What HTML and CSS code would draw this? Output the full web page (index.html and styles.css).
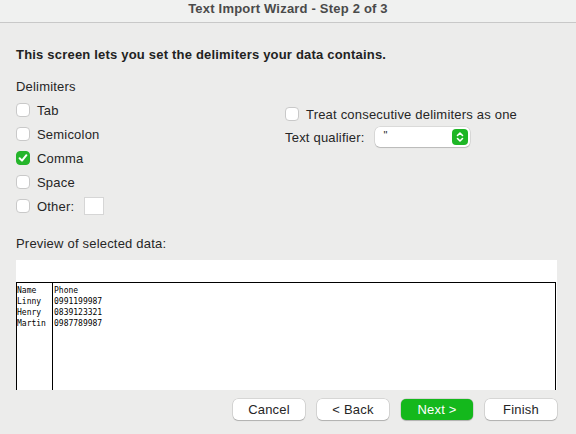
FILE: index.html
```html
<!DOCTYPE html>
<html lang="en">
<head>
  <meta charset="UTF-8" />
  <meta name="viewport" content="width=device-width, initial-scale=1.0"/>
  <title>Text Import Wizard</title>
  <link rel="stylesheet" href="styles.css">
</head>
<body>

  <div class="titlebar">Text Import Wizard - Step 2 of 3</div>

  <div class="content">
    <h1>This screen lets you set the delimiters your data contains.</h1>

    <div class="options">
      <div class="delims">
        <div class="group-label">Delimiters</div>
        <label class="row"><span class="box"></span>Tab</label>
        <label class="row"><span class="box"></span>Semicolon</label>
        <label class="row">
          <span class="box checked">
            <svg width="10" height="10" viewBox="0 0 10 10"><path d="M1.6 5.2 L4 7.6 L8.4 2.2" fill="none" stroke="#fff" stroke-width="2" stroke-linecap="round" stroke-linejoin="round"/></svg>
          </span>Comma
        </label>
        <label class="row"><span class="box"></span>Space</label>
        <label class="row"><span class="box"></span>Other:<span class="other-input"></span></label>
      </div>

      <div class="extra">
        <label class="row"><span class="box"></span>Treat consecutive delimiters as one</label>
        <div class="qualifier">
          <span>Text qualifier:</span>
          <div class="select">
            <span class="select-val">"</span>
            <span class="stepper">
              <svg width="10" height="12" viewBox="0 0 10 12"><path d="M2.5 4.5 L5 2 L7.5 4.5 M2.5 7.5 L5 10 L7.5 7.5" fill="none" stroke="#fff" stroke-width="1.6" stroke-linecap="round" stroke-linejoin="round"/></svg>
            </span>
          </div>
        </div>
      </div>
    </div>

    <div class="preview-label">Preview of selected data:</div>
    <div class="preview">
      <div class="table">
        <div class="col first">
          <div>Name</div>
          <div>Linny</div>
          <div>Henry</div>
          <div>Martin</div>
        </div>
        <div class="col">
          <div>Phone</div>
          <div>0991199987</div>
          <div>0839123321</div>
          <div>0987789987</div>
        </div>
      </div>
    </div>

    <div class="buttons">
      <button class="btn">Cancel</button>
      <button class="btn">&lt; Back</button>
      <button class="btn primary">Next &gt;</button>
      <button class="btn">Finish</button>
    </div>
  </div>

</body>
</html>
```

FILE: styles.css
```css
* {
  margin: 0;
  padding: 0;
  box-sizing: border-box;
}

body {
  background-color: #ececeb;
  font-family: "Liberation Sans", Arial, sans-serif;
  font-size: 13px;
  letter-spacing: 0.2px;
  color: #262626;
  width: 576px;
  height: 434px;
  overflow: hidden;
}

.titlebar {
  height: 23px;
  background-color: #f0f1f0;
  border-bottom: 1px solid #c8c8c8;
  text-align: center;
  font-weight: bold;
  color: #4a4a4a;
  line-height: 17px;
}

.content {
  padding: 0 19px 0 16px;
}

.content h1 {
  font-size: 13px;
  font-weight: bold;
  line-height: 16px;
  margin-top: 24px;
  color: #222;
}

.options {
  display: grid;
  grid-template-columns: 269px 1fr;
  margin-top: 16px;
}

.group-label {
  line-height: 16px;
  margin-bottom: 3px;
}

.row {
  display: flex;
  align-items: center;
  height: 24px;
  gap: 7px;
}

.box {
  width: 14px;
  height: 14px;
  background-color: #fff;
  border: 1px solid #c9c9c9;
  border-radius: 4px;
  display: flex;
  align-items: center;
  justify-content: center;
}

.box.checked {
  background-color: #25b52b;
  border-color: #25b52b;
}

.other-input {
  width: 20px;
  height: 18px;
  background-color: #fff;
  border: 1px solid #d6d6d6;
  margin-left: 3px;
}

.extra {
  padding-top: 23px;
}

.qualifier {
  display: flex;
  align-items: center;
  gap: 10px;
  margin-top: 1px;
}

.select {
  width: 95px;
  height: 20px;
  background-color: #fff;
  border-radius: 5px;
  box-shadow: 0 0 0 0.5px rgba(0, 0, 0, 0.15), 0 1px 1px rgba(0, 0, 0, 0.15);
  display: flex;
  align-items: center;
  justify-content: space-between;
  padding: 0 2px 0 9px;
}

.select-val {
  font-size: 11px;
  line-height: 12px;
  align-self: flex-start;
  margin-top: 2px;
}

.stepper {
  width: 16px;
  height: 16px;
  background-color: #1db625;
  border-radius: 4px;
  display: flex;
  align-items: center;
  justify-content: center;
}

.preview-label {
  margin-top: 18px;
  line-height: 16px;
}

.preview {
  margin-top: 8px;
  width: 541px;
  height: 130px;
  background-color: #fff;
  padding-top: 22px;
}

.table {
  display: flex;
  height: 108px;
  border: 1px solid #000;
  border-bottom: none;
  margin-right: 1px;
  font-family: "DejaVu Sans Mono", monospace;
  font-size: 8px;
  letter-spacing: 0;
  line-height: 11px;
  color: #000;
}

.col {
  padding-top: 2px;
  padding-left: 1px;
}

.col.first {
  width: 36px;
  border-right: 1px solid #000;
  padding-left: 0;
}

.buttons {
  display: flex;
  justify-content: flex-end;
  gap: 12px;
  margin-top: 9px;
  width: 541px;
}

.btn {
  width: 72px;
  height: 21px;
  background-color: #fff;
  border: none;
  border-radius: 5px;
  box-shadow: 0 0 0 0.5px rgba(0, 0, 0, 0.18), 0 1px 1px rgba(0, 0, 0, 0.18);
  font-family: "Liberation Sans", Arial, sans-serif;
  font-size: 13px;
  letter-spacing: 0.2px;
  color: #262626;
}

.btn.primary {
  background-color: #14b81c;
  color: #fff;
}
```
